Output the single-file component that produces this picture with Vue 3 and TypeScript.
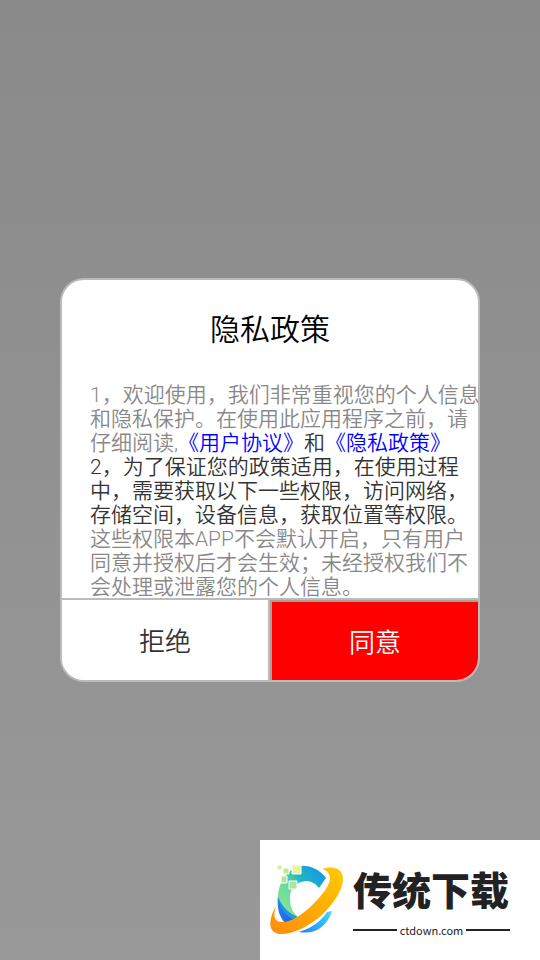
<script setup lang="ts">
import { ref } from 'vue'

interface Segment {
  text: string
  tone: 'muted' | 'strong' | 'link'
}

const lines: Segment[][] = [
  [{ text: '1，欢迎使用，我们非常重视您的个人信息', tone: 'muted' }],
  [{ text: '和隐私保护。在使用此应用程序之前，请', tone: 'muted' }],
  [
    { text: '仔细阅读,', tone: 'muted' },
    { text: '《用户协议》', tone: 'link' },
    { text: '和', tone: 'strong' },
    { text: '《隐私政策》', tone: 'link' },
  ],
  [{ text: '2，为了保证您的政策适用，在使用过程', tone: 'strong' }],
  [{ text: '中，需要获取以下一些权限，访问网络，', tone: 'strong' }],
  [{ text: '存储空间，设备信息，获取位置等权限。', tone: 'strong' }],
  [{ text: '这些权限本APP不会默认开启，只有用户', tone: 'muted' }],
  [{ text: '同意并授权后才会生效；未经授权我们不', tone: 'muted' }],
  [{ text: '会处理或泄露您的个人信息。', tone: 'muted' }],
]

const choice = ref<'none' | 'rejected' | 'accepted'>('none')
</script>

<template>
  <main class="screen">
    <section class="dialog" role="dialog" aria-modal="true" aria-labelledby="policy-title">
      <h1 id="policy-title" class="title">隐私政策</h1>
      <div class="policy">
        <p v-for="(line, i) in lines" :key="i" class="line">
          <template v-for="(part, j) in line" :key="j">
            <a v-if="part.tone === 'link'" class="link" href="#">{{ part.text }}</a>
            <span v-else :class="part.tone">{{ part.text }}</span>
          </template>
        </p>
      </div>
      <div class="actions">
        <button type="button" class="button reject" @click="choice = 'rejected'">拒绝</button>
        <button type="button" class="button accept" @click="choice = 'accepted'">同意</button>
      </div>
    </section>

    <aside class="brand">
      <svg class="mark" viewBox="0 0 80 72" aria-hidden="true">
        <defs>
          <linearGradient id="arc" gradientUnits="userSpaceOnUse" x1="14" y1="46" x2="58" y2="10">
            <stop offset="0" stop-color="#8fe58c" />
            <stop offset=".35" stop-color="#6bdba0" />
            <stop offset=".65" stop-color="#22b5c4" />
            <stop offset="1" stop-color="#1599e6" />
          </linearGradient>
          <linearGradient id="shade" x1="0" y1="0" x2="1" y2="1">
            <stop offset="0" stop-color="#2a8be8" />
            <stop offset="1" stop-color="#1d55ee" />
          </linearGradient>
          <linearGradient id="tail" x1="0" y1="1" x2="1" y2="0">
            <stop offset="0" stop-color="#2282f7" />
            <stop offset="1" stop-color="#42dcff" />
          </linearGradient>
          <linearGradient id="ring" x1="0" y1="1" x2="1" y2="0">
            <stop offset="0" stop-color="#ff8c0b" />
            <stop offset="1" stop-color="#ffca00" />
          </linearGradient>
        </defs>
        <path fill="url(#arc)" d="M33 0C43 -1 53 4 59 12L52 22C48 17 44 15 39 15C29 16 22 23 23 33C23 41 26 47 32 52L19 57C9 45 9 28 14 17C18 8 25 2 33 0Z" />
        <path fill="url(#shade)" d="M11 31C15 41 22 48 32 52L18 57C11 49 10 40 11 31Z" />
        <path fill="#1d9be4" d="M11 31C15 41 22 48 32 52L27 54C18 49 12 41 11 31Z" />
        <path fill="url(#tail)" d="M32 66C45 62 54 55 60 46L65 45C60 61 47 69 32 66Z" />
        <path fill="url(#ring)" d="M55 3C63 0 73 1 75 8C79 18 70 34 56 48C42 61 24 69 12 68C1 66 1 54 9 40C6 50 7 55 14 56C26 57 40 45 51 33C64 19 68 7 55 3Z" />
        <g stroke="#fff" stroke-width="1">
          <path fill="#e7f49b" d="M25 -1h9v9h-9z" />
          <path fill="#d3ef9d" d="M10 -1h5v5h-5z" />
          <path fill="#bcec91" d="M16 2h6v6h-6z" />
          <path fill="#b1e993" d="M14 10h6v7h-6z" />
          <path fill="#a9e89a" d="M22 15h8v8h-8z" />
        </g>
      </svg>
      <div class="wordmark">
        <strong class="name">传统下载</strong>
        <span class="domain">ctdown.com</span>
      </div>
    </aside>
  </main>
</template>

<style>
body {
  margin: 0;
}
</style>

<style scoped>
.screen {
  box-sizing: border-box;
  position: relative;
  display: flex;
  align-items: center;
  justify-content: center;
  min-height: 100vh;
  padding: 0 60px;
  background: linear-gradient(#8a8a8a, #999);
  font-family: Roboto, "Noto Sans CJK SC", sans-serif;
  font-weight: 350;
}

.dialog {
  box-sizing: border-box;
  flex: 1;
  max-width: 480px;
  overflow: hidden;
  border: 2px solid #bbb;
  border-radius: 24px;
  background: #fff;
}

.title {
  margin: 0;
  padding: 28px 0 31px;
  color: #000;
  font-size: 30px;
  font-weight: 350;
  line-height: 44px;
  text-align: center;
}

.policy {
  margin-bottom: -1px;
  padding-left: 28px;
  font-size: 21px;
  line-height: 24px;
}

.line {
  height: 24px;
  margin: 0;
  white-space: nowrap;
}

.muted {
  color: #888;
}

.strong {
  color: #333;
}

.link {
  color: #00f;
  text-decoration: none;
}

.actions {
  display: grid;
  grid-template-columns: 1fr 1fr;
  border-top: 2px solid #bbb;
}

.button {
  height: 80px;
  padding: 0 0 2px;
  border: 0;
  font: inherit;
  font-size: 26px;
  cursor: pointer;
}

.reject {
  border-right: 2px solid #bbb;
  background: #fff;
  color: #333;
}

.accept {
  border-top: 2px solid #aaa095;
  border-left: 2px solid #aaa095;
  background: #f00;
  color: #fff;
}

.brand {
  box-sizing: border-box;
  position: absolute;
  right: 0;
  bottom: 0;
  display: flex;
  gap: 6px;
  width: 280px;
  height: 120px;
  padding: 26px 30px 0 7px;
  background: #fff;
}

.mark {
  flex: none;
  width: 80px;
  height: 72px;
  overflow: visible;
}

.wordmark {
  display: flex;
  flex: 1;
  flex-direction: column;
  color: #222;
}

.name {
  font-family: "Noto Sans CJK SC", sans-serif;
  font-size: 39px;
  font-weight: 900;
  line-height: 44px;
  white-space: nowrap;
}

.domain {
  display: flex;
  align-items: center;
  gap: 3px;
  font-family: "Noto Sans CJK SC", sans-serif;
  font-size: 11px;
  font-weight: 400;
  line-height: 40px;
}

.domain::before,
.domain::after {
  flex: 1;
  height: 2px;
  background: #222;
  content: "";
}
</style>
